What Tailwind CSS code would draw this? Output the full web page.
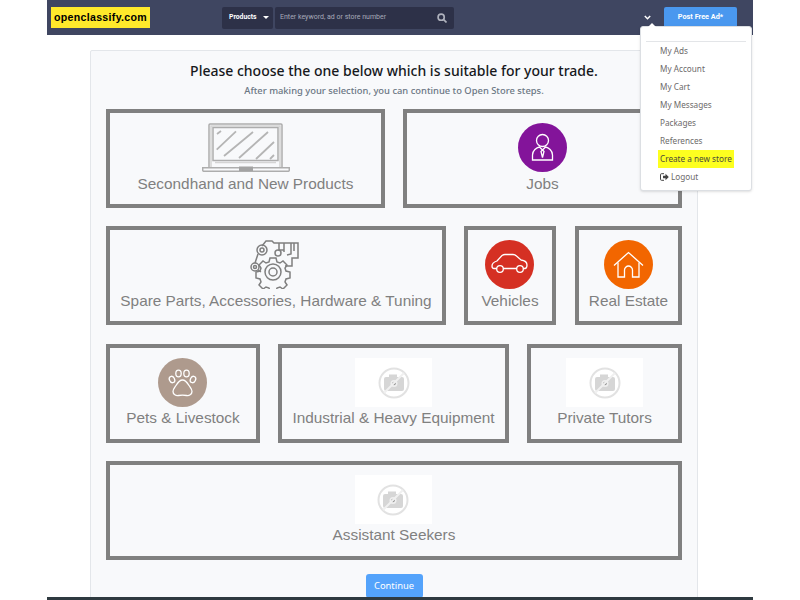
<!DOCTYPE html>
<html>
<head>
<meta charset="utf-8">
<script src="https://cdn.jsdelivr.net/npm/@tailwindcss/browser@4"></script>
</head>
<body class="bg-white overflow-hidden font-['Roboto',sans-serif]">
<div class="relative w-[800px] h-[600px] overflow-hidden">
  <div class="mx-[47px] w-[706px] h-[600px] flex flex-col">
    <header class="h-[35px] shrink-0 bg-[#3f4661] flex items-center pl-[4px] relative">
      <div class="w-[99px] h-[21px] bg-[#ffe92b] flex items-center justify-center text-[10.6px] font-bold text-black font-['Liberation_Sans',sans-serif] tracking-[0.32px]">openclassify.com</div>
      <div class="ml-[72px] w-[51px] h-[22px] rounded-[2px] bg-[#2d3148] flex items-center pl-[7px] gap-[6px] text-[6.8px] font-bold text-white">Products
        <span class="w-0 h-0 border-x-[3px] border-x-transparent border-t-[3px] border-t-white"></span>
      </div>
      <div class="ml-[2px] w-[179px] h-[22px] rounded-[2px] bg-[#2d3148] flex items-center justify-between pl-[5px] pr-[7px] text-[7px] text-[#a7aab8]">
        <span>Enter keyword, ad or store number</span>
        <svg class="w-[10px] h-[10px]" viewBox="0 0 12 12" fill="none" stroke="#aeb1bc" stroke-width="2"><circle cx="5" cy="5" r="3.7"/><path d="M8 8l3.4 3.4"/></svg>
      </div>
      <svg class="absolute left-[597px] top-[15px] w-[7px] h-[5px]" viewBox="0 0 7 5" fill="none" stroke="#fff" stroke-width="1.5"><path d="M.8 1l2.7 2.7L6.200 1"/></svg>
      <div class="absolute left-[617px] top-[7px] w-[73px] h-[21px] rounded-[2px] bg-[#4a98ef] flex items-center justify-center text-[7.300px] font-bold text-white">Post Free Ad*</div>
    </header>

    <main class="relative mt-[15px] ml-[43px] w-[608px] flex-1 bg-[#f8f9fb] border border-[#e3e6ea] rounded-t-[2px] flex flex-col items-center">
      <h1 class="mt-[11px] h-[18px] leading-[18px] text-[14px] font-medium text-[#16181b] font-['Noto_Sans',sans-serif]">Please choose the one below which is suitable for your trade.</h1>
      <p class="mt-[4px] h-[13px] leading-[13px] text-[9.400px] font-medium text-[#6a7683] font-['Noto_Sans',sans-serif]">After making your selection, you can continue to Open Store steps.</p>

      <div class="mt-[12px] w-[576px] flex flex-col gap-[18px] text-[#808080] font-['Liberation_Sans',sans-serif] text-[15.35px]">
        <div class="flex justify-between">
          <div class="w-[279px] h-[99px] border-[4px] border-[#808080] flex flex-col items-center">
            <svg class="mt-[10px] w-[88px] h-[49px]" viewBox="0 0 88 49" fill="none" stroke="#adadad"><path stroke-width="1.500" d="M7 44V2a1 1 0 0 1 1-1h71a1 1 0 0 1 1 1v42"/><rect x="11" y="4.500" width="65" height="33" stroke-width="1.500"/><path stroke="#d4d4d4" stroke-width="1.500" d="M9 44V3h69v41M13 39.500h61"/><path stroke-width="1.500" d="M.7 44.700h86.600v2.300a1.300 1.300 0 0 1-1.300 1.300H2a1.300 1.300 0 0 1-1.300-1.300z"/><rect x="37" y="43.500" width="14" height="4.500" fill="#a3a3a3" stroke="none"/><path stroke="#b5b5b5" stroke-width="1.800" d="M15 11l4-3M14.700 26.700L34 8.300M22 33L51 9M37 35L66 9M54 36L72 19M68 36l4-4"/></svg>
            <div class="mt-[3px] leading-[18px]">Secondhand and New Products</div>
          </div>
          <div class="w-[279px] h-[99px] border-[4px] border-[#808080] flex flex-col items-center">
            <svg class="mt-[10px] w-[49px] h-[49px]" viewBox="0 0 49 49"><circle cx="24.500" cy="24.500" r="24.500" fill="#83149a"/><g fill="none" stroke="#fff" stroke-width="1.300"><circle cx="24.500" cy="17.500" r="6"/><path d="M14.500 37v-5c0-4.500 4-7.500 7-8l3 3 3-3c3 .5 7 3.500 7 8v5z"/><path d="M24.500 27l-1.500 1.500 1.500 6 1.500-6z"/></g></svg>
            <div class="mt-[3px] leading-[18px]">Jobs</div>
          </div>
        </div>

        <div class="flex justify-between">
          <div class="w-[340px] h-[99px] border-[4px] border-[#808080] flex flex-col items-center">
            <svg class="mt-[9px] w-[50px] h-[50px] mr-[2px]" viewBox="0 0 50 50" fill="none" stroke="#7f7f7f" stroke-width="1.500"><path d="M12 7l4-5h6l2 2h24v15h-6v8h-7M41 4v11l-4 1M29 4v7h5V4M34 4v9M44 4v8"/><circle cx="12" cy="11" r="5"/><circle cx="12" cy="11" r="2"/><circle cx="28" cy="14" r="3"/><circle cx="5" cy="28" r="4"/><circle cx="5" cy="28" r="1.500"/><path d="M8 15l-3 9M8 31l3 2"/><circle cx="23" cy="33" r="8"/><circle cx="23" cy="33" r="4"/><path d="M20 19h6l1 4 3 1 3-2 4 4-2 3 1 3 4 1v6l-4 1-1 3 2 3-4 4-3-2-3 1-1 3h-6l-1-3-3-1-3 2-4-4 2-3-1-3-4-1v-6l4-1 1-3-2-3 4-4 3 2 3-1z"/></svg>
            <div class="mt-[3px] leading-[18px]">Spare Parts, Accessories, Hardware &amp; Tuning</div>
          </div>
          <div class="ml-[18px] w-[92px] h-[99px] border-[4px] border-[#808080] flex flex-col items-center">
            <svg class="mt-[10px] w-[49px] h-[49px] mr-[2px]" viewBox="0 0 49 49"><circle cx="24.500" cy="24.500" r="24.500" fill="#d53023"/><g fill="none" stroke="#fff" stroke-width="1.300"><path d="M12 28.500H9c-1.500 0-2-1-2-2.500 0-3 2-4 5-5l5-5.500c1-.7 2-1 3-1h8c1.500 0 2.500.5 3.500 1.500L36 20c4 .5 6 2 6 5 0 2-.5 3.500-2 3.500h-2M18 28.500h14"/><circle cx="15" cy="29" r="3.300"/><circle cx="35" cy="29" r="3.300"/></g></svg>
            <div class="mt-[3px] leading-[18px]">Vehicles</div>
          </div>
          <div class="ml-[19px] w-[107px] h-[99px] border-[4px] border-[#808080] flex flex-col items-center">
            <svg class="mt-[10px] w-[49px] h-[49px]" viewBox="0 0 49 49"><circle cx="24.500" cy="24.500" r="24.500" fill="#f26600"/><g fill="none" stroke="#fff" stroke-width="1.300"><path d="M10 25.500L24.500 12.500 39 25.500"/><path d="M14 22.500V37h6.500v-7c0-2 2-4 4-4s4 2 4 4v7H35V22.500"/></g></svg>
            <div class="mt-[3px] leading-[18px]">Real Estate</div>
          </div>
        </div>

        <div class="mt-px flex justify-between">
          <div class="w-[154px] h-[99px] border-[4px] border-[#808080] flex flex-col items-center">
            <svg class="mt-[10px] w-[49px] h-[49px] mr-[2px]" viewBox="0 0 49 49"><circle cx="24.500" cy="24.500" r="24.500" fill="#ae9a8d"/><g fill="none" stroke="#fff" stroke-width="1.300"><ellipse cx="14" cy="21.500" rx="2.600" ry="3.300" transform="rotate(-25 14 21.500)"/><ellipse cx="20.500" cy="15.500" rx="2.700" ry="3.400"/><ellipse cx="28.500" cy="15.500" rx="2.700" ry="3.400"/><ellipse cx="35" cy="21.500" rx="2.600" ry="3.300" transform="rotate(25 35 21.500)"/><path d="M24.500 22c-3 0-5 3-6.500 5.500s-3 3.500-3 6c0 3 3 4.500 5.500 4 2.500-.4 5.500-.4 8 0 2.500.5 5.500-1 5.500-4 0-2.500-1.500-3.500-3-6S27.500 22 24.500 22z"/></g></svg>
            <div class="mt-[2px] leading-[18px]">Pets &amp; Livestock</div>
          </div>
          <div class="w-[231px] h-[99px] border-[4px] border-[#808080] flex flex-col items-center">
            <div class="mt-[10px] w-[77px] h-[49px] bg-white flex items-center justify-center">
              <svg class="w-[32px] h-[32px]" viewBox="0 0 32 32"><circle cx="16" cy="16" r="14.500" fill="none" stroke="#e2e2e2" stroke-width="2"/><rect x="6" y="10" width="20" height="14" rx="2" fill="#d6d6d6"/><rect x="11" y="7.500" width="8" height="4" fill="#d6d6d6"/><circle cx="16" cy="16.500" r="3.500" fill="#efefef"/><circle cx="16" cy="16.500" r="1.800" fill="#8f8f8f"/><path d="M6 26L26 6" stroke="#f0f0f0" stroke-width="2"/></svg>
            </div>
            <div class="mt-[2px] leading-[18px]">Industrial &amp; Heavy Equipment</div>
          </div>
          <div class="w-[155px] h-[99px] border-[4px] border-[#808080] flex flex-col items-center">
            <div class="mt-[10px] w-[77px] h-[49px] bg-white flex items-center justify-center">
              <svg class="w-[32px] h-[32px]" viewBox="0 0 32 32"><circle cx="16" cy="16" r="14.500" fill="none" stroke="#e2e2e2" stroke-width="2"/><rect x="6" y="10" width="20" height="14" rx="2" fill="#d6d6d6"/><rect x="11" y="7.500" width="8" height="4" fill="#d6d6d6"/><circle cx="16" cy="16.500" r="3.500" fill="#efefef"/><circle cx="16" cy="16.500" r="1.800" fill="#8f8f8f"/><path d="M6 26L26 6" stroke="#f0f0f0" stroke-width="2"/></svg>
            </div>
            <div class="mt-[2px] leading-[18px]">Private Tutors</div>
          </div>
        </div>

        <div class="w-[576px] h-[99px] border-[4px] border-[#808080] flex flex-col items-center">
          <div class="mt-[10px] w-[77px] h-[49px] bg-white flex items-center justify-center mr-[2px]">
            <svg class="w-[32px] h-[32px]" viewBox="0 0 32 32"><circle cx="16" cy="16" r="14.500" fill="none" stroke="#e2e2e2" stroke-width="2"/><rect x="6" y="10" width="20" height="14" rx="2" fill="#d6d6d6"/><rect x="11" y="7.500" width="8" height="4" fill="#d6d6d6"/><circle cx="16" cy="16.500" r="3.500" fill="#efefef"/><circle cx="16" cy="16.500" r="1.800" fill="#8f8f8f"/><path d="M6 26L26 6" stroke="#f0f0f0" stroke-width="2"/></svg>
          </div>
          <div class="mt-[2px] leading-[18px]">Assistant Seekers</div>
        </div>
      </div>

      <button class="mt-[14px] w-[57px] h-[24px] rounded-[3px] bg-[#54a3fb] text-white text-[9.400px] font-['Noto_Sans',sans-serif]">Continue</button>
    </main>
  </div>

  <div class="absolute left-[47px] top-[597px] w-[706px] h-[3px] bg-[#2f3a40]"></div>

  <nav class="absolute left-[640px] top-[26px] w-[112px] h-[165px] bg-white border border-[#dcdfe3] rounded-[3px] shadow-sm text-[8.200px] text-[#6d6a6a] font-['Noto_Sans',sans-serif]">
    <span class="absolute left-[7px] -top-[4px] w-0 h-0 border-x-[4px] border-x-transparent border-b-[4px] border-b-white"></span>
    <div class="mt-[14px] mx-[5px] h-px bg-[#e3e5e8]"></div>
    <ul class="pl-[19px]">
      <li class="h-[18px] leading-[18px]">My Ads</li>
      <li class="h-[18px] leading-[18px]">My Account</li>
      <li class="h-[18px] leading-[18px]">My Cart</li>
      <li class="h-[18px] leading-[18px]">My Messages</li>
      <li class="h-[18px] leading-[18px]">Packages</li>
      <li class="h-[18px] leading-[18px]">References</li>
      <li class="h-[18px] leading-[18px]"><span class="-ml-[2px] inline-block bg-[#fdff1f] px-[2px] text-[#4a4a3a]">Create a new store</span></li>
      <li class="h-[18px] leading-[18px] flex items-center gap-[2px]">
        <svg class="w-[9px] h-[8px]" viewBox="0 0 9 8"><path d="M4 .7H1.500a1 1 0 0 0-1 1v4.600a1 1 0 0 0 1 1H4" fill="none" stroke="#444" stroke-width="1"/><path d="M3 2.800h2.500V.8L8.800 4 5.500 7.200V5.200H3z" fill="#444"/></svg>
        <span>Logout</span>
      </li>
    </ul>
  </nav>
</div>
</body>
</html>
